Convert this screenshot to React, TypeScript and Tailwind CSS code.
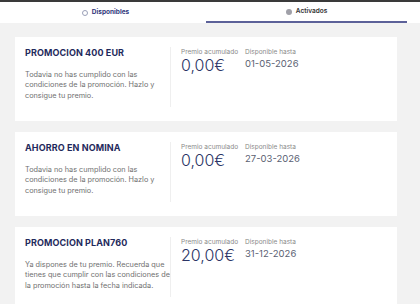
import React from 'react';

interface Promo {
  title: string;
  lines: string[];
  amount: string;
  until: string;
}

const promos: Promo[] = [
  {
    title: 'PROMOCION 400 EUR',
    lines: ['Todavia no has cumplido con las', 'condiciones de la promoción. Hazlo y', 'consigue tu premio.'],
    amount: '0,00€',
    until: '01-05-2026',
  },
  {
    title: 'AHORRO EN NOMINA',
    lines: ['Todavia no has cumplido con las', 'condiciones de la promoción. Hazlo y', 'consigue tu premio.'],
    amount: '0,00€',
    until: '27-03-2026',
  },
  {
    title: 'PROMOCION PLAN760',
    lines: ['Ya dispones de tu premio. Recuerda que', 'tienes que cumplir con las condiciones de', 'la promoción hasta la fecha indicada.'],
    amount: '20,00€',
    until: '31-12-2026',
  },
];

/**
 * Tarjeta de promoción
 */
function PromoCard({ promo }: { promo: Promo }) {
  return (
    <div className="bg-white h-[84px] flex shrink-0">
      {/* izquierda */}
      <div className="w-[155px] pl-[10px] pt-[10px]">
        <h2 className="text-[9px] leading-[11px] font-bold text-[#1f2a5c] tracking-[0.1px]">{promo.title}</h2>
        <p className="mt-[12px] text-[7.3px] leading-[10.3px] text-[#707070]">
          {promo.lines.map((l, i) => (
            <span key={i} className="block whitespace-nowrap">{l}</span>
          ))}
        </p>
      </div>

      {/* derecha */}
      <div className="flex mt-[10px] mb-[14px] border-l border-[#efefef] pl-[10px] pt-[1px]">
        <div className="w-[64px]">
          <div className="text-[6.5px] leading-[9px] text-[#8a8a8a]">Premio acumulado</div>
          <div className="text-[16px] leading-[16px] font-light text-[#2b3566]">{promo.amount}</div>
        </div>
        <div>
          <div className="text-[6.5px] leading-[9px] text-[#8a8a8a]">Disponible hasta</div>
          <div className="text-[9.5px] leading-[13px] text-[#5b5f73]">{promo.until}</div>
        </div>
      </div>
    </div>
  );
}

export default function App() {
  return (
    <div className="w-[420px] h-[304px] overflow-hidden bg-[#f2f2f2] flex flex-col" style={{ fontFamily: 'Inter, "Noto Sans", sans-serif' }}>
      <div className="h-[2px] bg-[#3a3a3a] shrink-0" />

      {/* pestañas */}
      <div className="bg-white h-[21px] flex px-[5px] pr-[13px] shrink-0">
        <div className="flex-1 flex items-center justify-center gap-[4px] pt-[1px]">
          <span className="w-[6px] h-[6px] rounded-full border border-[#9aa0b8]" />
          <span className="text-[6.5px] font-bold text-[#2f357a]">Disponibles</span>
        </div>
        <div className="flex-1 flex items-center justify-center gap-[4px] border-b-2 border-[#5c6199]">
          <span className="w-[6px] h-[6px] rounded-full bg-[#a0a0a8]" />
          <span className="text-[6.5px] font-semibold text-[#333]">Activados</span>
        </div>
      </div>

      {/* lista */}
      <div className="flex flex-col gap-[11px] pl-[15px] pr-[23px] pt-[14px]">
        {promos.map((p) => (
          <PromoCard key={p.title} promo={p} />
        ))}
      </div>
    </div>
  );
}
